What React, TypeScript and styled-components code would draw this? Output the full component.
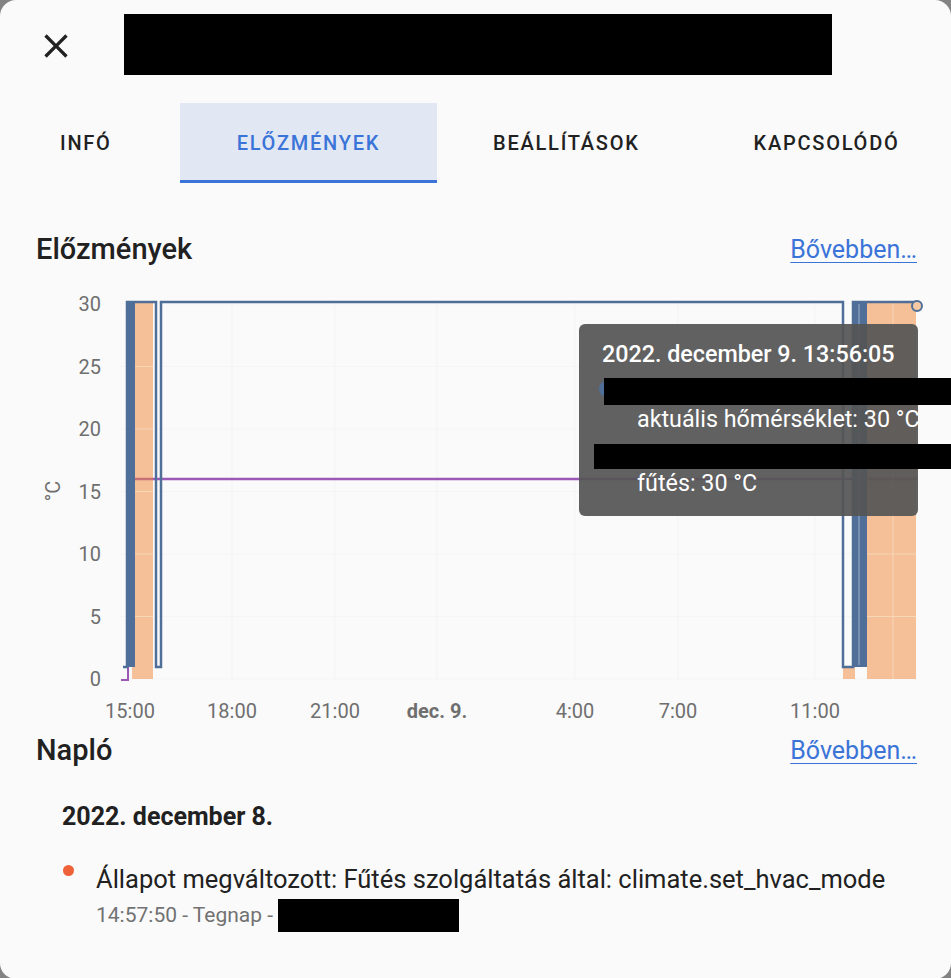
import React from 'react';
import styled, { createGlobalStyle } from 'styled-components';

const GlobalStyle = createGlobalStyle`
  html, body { margin: 0; padding: 0; background: #838383; }
  body { font-family: Roboto, "Noto Sans", sans-serif; color: #212121; }
`;

const Dialog = styled.div`
  width: 951px;
  height: 979px;
  background: #fafafa;
  border-radius: 16px;
  overflow: hidden;
  display: flex;
  flex-direction: column;
`;

const Header = styled.div`
  height: 91px;
  display: flex;
  align-items: center;
  padding-left: 32px;
`;

const CloseButton = styled.button`
  width: 48px;
  height: 48px;
  border: none;
  background: none;
  padding: 0;
  display: flex;
  align-items: center;
  justify-content: center;
  color: #212121;
  cursor: pointer;
`;

const Redacted = styled.span<{ $w: number; $h: number }>`
  display: inline-block;
  width: ${(p) => p.$w}px;
  height: ${(p) => p.$h}px;
  background: #000;
  flex: none;
`;

const TitleBar = styled(Redacted)`
  margin-left: 44px;
  margin-top: -3px;
`;

const TabRow = styled.div`
  display: flex;
  margin-top: 12px;
  margin-left: -8px;
  height: 80px;
`;

const Tab = styled.div<{ $active?: boolean; $pad: number }>`
  display: flex;
  align-items: center;
  justify-content: center;
  padding: 3px ${(p) => p.$pad}px 0;
  box-sizing: border-box;
  font-size: 20px;
  font-weight: 500;
  letter-spacing: 1.75px;
  text-transform: uppercase;
  color: ${(p) => (p.$active ? '#3b74d8' : '#212121')};
  background: ${(p) => (p.$active ? '#e1e8f4' : 'transparent')};
  border-bottom: 3px solid ${(p) => (p.$active ? '#3b74d8' : 'transparent')};
`;

const SectionHeader = styled.div<{ $top: number }>`
  display: flex;
  justify-content: space-between;
  align-items: center;
  height: 36px;
  margin-top: ${(p) => p.$top}px;
  padding: 0 34px 0 36px;
`;

const SectionTitle = styled.div`
  font-size: 29px;
  font-weight: 500;
  color: #212121;
`;

const MoreLink = styled.a`
  font-size: 25px;
  color: #3b74d8;
  text-decoration: underline;
  text-underline-offset: 4px;
  text-decoration-thickness: 1px;
`;

const ChartWrap = styled.div`
  position: relative;
  height: 465px;
`;

const Tooltip = styled.div`
  position: absolute;
  left: 579px;
  top: 57px;
  width: 339px;
  height: 192px;
  box-sizing: border-box;
  padding: 15px 0 0 23px;
  background: rgba(85, 85, 85, 0.93);
  border-radius: 6px;
  overflow: hidden;
  color: #fff;
  font-size: 23.3px;
  white-space: nowrap;
`;

const TipTitle = styled.div`
  font-weight: 500;
  line-height: 30px;
`;

const TipItem = styled.div<{ $top: number }>`
  margin-top: ${(p) => p.$top}px;
`;

const TipName = styled.div`
  display: flex;
  align-items: center;
  height: 30px;
`;

const Marker = styled.span<{ $color: string; $shift: number }>`
  width: 16px;
  height: 16px;
  border-radius: 50%;
  background: ${(p) => p.$color};
  margin-left: ${(p) => p.$shift}px;
`;

const TipValue = styled.div`
  padding-left: 35px;
  line-height: 30px;
`;

const Overlay = styled.div<{ $x: number; $y: number; $w: number; $h: number }>`
  position: absolute;
  left: ${(p) => p.$x}px;
  top: ${(p) => p.$y}px;
  width: ${(p) => p.$w}px;
  height: ${(p) => p.$h}px;
  background: #000;
`;

const DateHeading = styled.div`
  margin-top: 33px;
  padding-left: 62px;
  font-size: 25px;
  font-weight: 700;
  line-height: 32px;
`;

const Entry = styled.div`
  display: flex;
  align-items: flex-start;
  margin-top: 31px;
  padding-left: 63px;
`;

const Dot = styled.span`
  width: 11px;
  height: 11px;
  border-radius: 50%;
  background: #ef6139;
  margin-top: 1px;
  margin-right: 22px;
  flex: none;
`;

const EntryText = styled.div`
  display: flex;
  flex-direction: column;
`;

const EntryMessage = styled.div`
  font-size: 25.5px;
  line-height: 30px;
  color: #212121;
  white-space: nowrap;
`;

const EntryMeta = styled.div`
  display: flex;
  align-items: center;
  gap: 5px;
  margin-top: 5px;
  font-size: 21px;
  line-height: 33px;
  color: #727272;
`;

const BLUE = '#4f6f98';
const ORANGE = '#ef8a3c';
const PURPLE = '#9b59b6';

const yTicks = [30, 25, 20, 15, 10, 5, 0];
const xTicks: { x: number; label: string; bold?: boolean }[] = [
  { x: 130, label: '15:00' },
  { x: 232, label: '18:00' },
  { x: 335, label: '21:00' },
  { x: 437, label: 'dec. 9.', bold: true },
  { x: 575, label: '4:00' },
  { x: 678, label: '7:00' },
  { x: 815, label: '11:00' },
];
const yOf = (v: number) => 679 - v * 12.5;

const HistoryChart = () => (
  <svg width={951} height={465} viewBox="0 267 951 465" style={{ display: 'block' }}>
    {yTicks.map((v) => (
      <line key={v} x1={120} x2={917} y1={yOf(v)} y2={yOf(v)} stroke="#f5f5f5" strokeWidth={1} />
    ))}
    {xTicks.map((t) => (
      <line key={t.label} x1={t.x} x2={t.x} y1={300} y2={680} stroke="#f3f3f3" strokeWidth={1} />
    ))}
    <path d="M121 680 H128 V667" fill="none" stroke={PURPLE} strokeWidth={2} />
    <line x1={128} x2={917} y1={479} y2={479} stroke={PURPLE} strokeWidth={2.5} />
    <g fill={ORANGE} fillOpacity={0.52}>
      <rect x={132} y={303} width={21} height={376} />
      <rect x={843} y={667} width={12} height={12} />
      <rect x={867} y={302} width={49} height={377} />
    </g>
    <g stroke="#fbe2c6" strokeWidth={1} opacity={0.7}>
      {yTicks.slice(1, 6).map((v) => (
        <React.Fragment key={v}>
          <line x1={133} x2={153} y1={yOf(v)} y2={yOf(v)} />
          <line x1={867} x2={916} y1={yOf(v)} y2={yOf(v)} />
        </React.Fragment>
      ))}
      <line x1={893} x2={893} y1={302} y2={679} />
    </g>
    <g fill={BLUE}>
      <rect x={127} y={302} width={8} height={365} />
      <rect x={853} y={302} width={14} height={365} />
    </g>
    <path
      d="M123 667 H127 V302 H156 V667 H161 V302 H843 V667 H853 V302 H917"
      fill="none"
      stroke={BLUE}
      strokeWidth={2.5}
    />
    <line x1={859} x2={859} y1={304} y2={665} stroke="#9fb3cc" strokeWidth={1} />
    <circle cx={917} cy={306} r={5} fill="#f5c9a3" stroke={BLUE} strokeWidth={2} />
    <g fontFamily="Roboto, sans-serif" fontSize={20} fill="#6f6f6f">
      {yTicks.map((v) => (
        <text key={v} x={101} y={yOf(v)} textAnchor="end" dominantBaseline="central">
          {v}
        </text>
      ))}
      {xTicks.map((t) => (
        <text
          key={t.label}
          x={t.x}
          y={711}
          textAnchor="middle"
          dominantBaseline="central"
          fontWeight={t.bold ? 700 : 400}
        >
          {t.label}
        </text>
      ))}
      <text x={53} y={491} textAnchor="middle" dominantBaseline="central" transform="rotate(-90 53 491)">
        °C
      </text>
    </g>
  </svg>
);

const tabs = [
  { label: 'Infó', pad: 68 },
  { label: 'Előzmények', pad: 57 },
  { label: 'Beállítások', pad: 56 },
  { label: 'Kapcsolódó', pad: 58 },
];

export default function App() {
  return (
    <>
      <GlobalStyle />
      <Dialog>
        <Header>
          <CloseButton aria-label="Bezárás">
            <svg width="40" height="40" viewBox="0 0 24 24">
              <path
                fill="currentColor"
                d="M19,6.41L17.59,5L12,10.59L6.41,5L5,6.41L10.59,12L5,17.59L6.41,19L12,13.41L17.59,19L19,17.59L13.41,12L19,6.41Z"
              />
            </svg>
          </CloseButton>
          <TitleBar $w={708} $h={61} />
        </Header>
        <TabRow>
          {tabs.map((t) => (
            <Tab key={t.label} $pad={t.pad} $active={t.label === 'Előzmények'}>
              {t.label}
            </Tab>
          ))}
        </TabRow>
        <SectionHeader $top={48}>
          <SectionTitle>Előzmények</SectionTitle>
          <MoreLink>Bővebben…</MoreLink>
        </SectionHeader>
        <ChartWrap>
          <HistoryChart />
          <Tooltip>
            <TipTitle>2022. december 9. 13:56:05</TipTitle>
            <TipItem $top={5}>
              <TipName>
                <Marker $color={BLUE} $shift={-3} />
              </TipName>
              <TipValue>aktuális hőmérséklet: 30 °C</TipValue>
            </TipItem>
            <TipItem $top={4}>
              <TipName>
                <Marker $color={ORANGE} $shift={1} />
              </TipName>
              <TipValue>fűtés: 30 °C</TipValue>
            </TipItem>
          </Tooltip>
          <Overlay $x={604} $y={111} $w={347} $h={27} />
          <Overlay $x={594} $y={177} $w={357} $h={25} />
        </ChartWrap>
        <SectionHeader $top={0}>
          <SectionTitle>Napló</SectionTitle>
          <MoreLink>Bővebben…</MoreLink>
        </SectionHeader>
        <DateHeading>2022. december 8.</DateHeading>
        <Entry>
          <Dot />
          <EntryText>
            <EntryMessage>
              Állapot megváltozott: Fűtés szolgáltatás által: climate.set_hvac_mode
            </EntryMessage>
            <EntryMeta>
              14:57:50 - Tegnap -
              <Redacted $w={181} $h={33} />
            </EntryMeta>
          </EntryText>
        </Entry>
      </Dialog>
    </>
  );
}
